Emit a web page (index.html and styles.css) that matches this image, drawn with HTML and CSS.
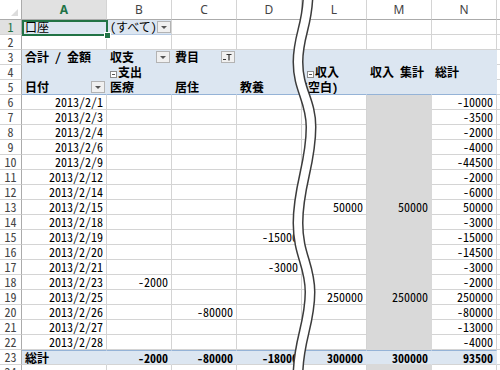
FILE: index.html
```html
<!DOCTYPE html>
<html lang="ja">
<head>
  <meta charset="UTF-8" />
  <title>家計簿 ピボット</title>
  <link rel="stylesheet" href="styles.css">
</head>
<body>

  <div class="sheet" id="sheet">
    <!-- 列見出し -->
    <div class="row head">
      <div class="rh corner"></div>
      <div class="sel">A</div>
      <div>B</div>
      <div>C</div>
      <div>D</div>
      <div>L</div>
      <div>M</div>
      <div>N</div>
      <div></div>
    </div>

    <!-- ページフィールド -->
    <div class="row">
      <div class="rh rh-sel">1</div>
      <div class="page active">口座</div>
      <div class="page field">(すべて)<span class="dd"></span></div>
      <div></div><div></div><div></div><div></div><div></div><div></div>
    </div>
    <div class="row">
      <div class="rh">2</div>
      <div></div><div></div><div></div><div></div><div></div><div></div><div></div><div></div>
    </div>

    <!-- ピボット見出し -->
    <div class="row pv">
      <div class="rh">3</div>
      <div class="b">合計 / 金額</div>
      <div class="b field">収支<span class="dd"></span></div>
      <div class="b field">費目<span class="dd flt">
        <svg width="12" height="10" viewBox="0 0 12 10"><path d="M1 7.5h3M4.5 2.5h5M7 2.5v6" stroke="#333" stroke-width="1.2" fill="none"/></svg>
      </span></div>
      <div></div><div></div><div></div><div></div>
      <div class="x"></div>
    </div>
    <div class="row pv">
      <div class="rh">4</div>
      <div></div>
      <div class="b"><span class="minus"></span>支出</div>
      <div></div><div></div>
      <div class="b col-l"><span class="minus"></span>収入</div>
      <div class="b gray">収入 集計</div>
      <div class="b">総計</div>
      <div class="x"></div>
    </div>
    <div class="row pv last">
      <div class="rh">5</div>
      <div class="b field">日付<span class="dd"></span></div>
      <div class="b">医療</div>
      <div class="b">居住</div>
      <div class="b">教養</div>
      <div class="b blank">(空白)</div>
      <div class="gray"></div>
      <div></div>
      <div class="x"></div>
    </div>

    <div id="body"></div>
  </div>

  <!-- 省略の波線 -->
  <svg class="cut" width="500" height="370" viewBox="0 0 500 370">
    <path d="M308,-6 C308,25 298,35 298,62 C298,90 311,100 311,127 C311,165 298,185 298,223 C298,255 310,265 310,292 C310,325 298,340 298,376"
          stroke="#3c3c3c" stroke-width="11" fill="none"/>
    <path d="M308,-6 C308,25 298,35 298,62 C298,90 311,100 311,127 C311,165 298,185 298,223 C298,255 310,265 310,292 C310,325 298,340 298,376"
          stroke="#fff" stroke-width="8" fill="none"/>
  </svg>

  <script>
    // 日付, 医療, 居住, 教養, (空白), 収入 集計, 総計
    const data = [
      ["2013/2/1", "", "", "", "", "", "-10000"],
      ["2013/2/3", "", "", "", "", "", "-3500"],
      ["2013/2/4", "", "", "", "", "", "-2000"],
      ["2013/2/6", "", "", "", "", "", "-4000"],
      ["2013/2/9", "", "", "", "", "", "-44500"],
      ["2013/2/12", "", "", "", "", "", "-2000"],
      ["2013/2/14", "", "", "", "", "", "-6000"],
      ["2013/2/15", "", "", "", "50000", "50000", "50000"],
      ["2013/2/18", "", "", "", "", "", "-3000"],
      ["2013/2/19", "", "", "-15000", "", "", "-15000"],
      ["2013/2/20", "", "", "", "", "", "-14500"],
      ["2013/2/21", "", "", "-3000", "", "", "-3000"],
      ["2013/2/23", "-2000", "", "", "", "", "-2000"],
      ["2013/2/25", "", "", "", "250000", "250000", "250000"],
      ["2013/2/26", "", "-80000", "", "", "", "-80000"],
      ["2013/2/27", "", "", "", "", "", "-13000"],
      ["2013/2/28", "", "", "", "", "", "-4000"]
    ];
    const totals = ["総計", "-2000", "-80000", "-18000", "300000", "300000", "93500"];

    function makeRow(num, cells, cls) {
      const row = document.createElement("div");
      row.className = "row" + (cls ? " " + cls : "");
      const rh = document.createElement("div");
      rh.className = "rh";
      rh.innerText = num;
      row.appendChild(rh);
      cells.forEach((text, i) => {
        const div = document.createElement("div");
        div.className = (i == 0 && cls == "total") ? "" : "num";
        if (i == 5) div.className += " gray";
        div.innerText = text;
        row.appendChild(div);
      });
      row.appendChild(document.createElement("div"));
      return row;
    }

    const body = document.getElementById("body");
    data.forEach((cells, i) => body.appendChild(makeRow(i + 6, cells)));
    body.appendChild(makeRow(23, totals, "total"));
    body.appendChild(makeRow(24, ["", "", "", "", "", "", ""]));
  </script>

</body>
</html>
```

FILE: styles.css
```css
body {
  margin: 0;
  background: #fff;
  color: #000;
  font-family: "Noto Sans CJK JP", "Noto Sans", sans-serif;
  font-size: 12px;
  font-feature-settings: "hwid";
  overflow: hidden;
}

.sheet {
  position: relative;
  width: 500px;
  height: 370px;
  overflow: hidden;
}

.row {
  display: grid;
  grid-template-columns: 22px 85px 65px 65px 65px 65px 65px 65px 3px;
  height: 15px;
}

.row > div {
  box-sizing: border-box;
  border-right: 1px solid #d4d4d4;
  border-bottom: 1px solid #d4d4d4;
  padding: 0 3px;
  line-height: 14px;
  white-space: nowrap;
  overflow: hidden;
}

.num {
  text-align: right;
}

/* 見出し */
.head {
  height: 20px;
}

.head > div {
  border-bottom-color: #ababab;
  text-align: center;
  line-height: 19px;
  color: #444;
  font-family: "Noto Sans", sans-serif;
  font-size: 12px;
}

.head .sel {
  background: #e1e1e1;
  color: #217346;
  font-weight: bold;
}

.row > .rh {
  padding: 0;
  border-right-color: #ababab;
  text-align: center;
  color: #444;
}

.row > .rh-sel {
  background: #e1e1e1;
  color: #217346;
}

.corner {
  position: relative;
}

.corner::after {
  content: "";
  position: absolute;
  right: 3px;
  bottom: 3px;
  border-left: 7px solid transparent;
  border-bottom: 7px solid #dcdcdc;
}

/* ページフィールド */
.row > .page {
  background: #dce6f1;
  border-bottom-color: #b8cce4;
}

.row > .active {
  position: relative;
  overflow: visible;
}

.active::before {
  content: "";
  position: absolute;
  left: 0;
  top: 0;
  width: 86px;
  height: 16px;
  box-sizing: border-box;
  border: 2px solid #217346;
  z-index: 2;
}

.active::after {
  content: "";
  position: absolute;
  left: 82px;
  top: 12px;
  width: 5px;
  height: 5px;
  background: #217346;
  border: 1px solid #fff;
  z-index: 3;
}

.row > .field {
  display: flex;
  align-items: center;
  justify-content: space-between;
  padding-right: 1px;
}

.dd {
  position: relative;
  width: 14px;
  height: 12px;
  box-sizing: border-box;
  border: 1px solid #b3b3b3;
  background: #f0f0f0;
  flex: none;
}

.dd::after {
  content: "";
  position: absolute;
  left: 3px;
  top: 4px;
  border-left: 3px solid transparent;
  border-right: 3px solid transparent;
  border-top: 3px solid #555;
}

.dd.flt::after {
  display: none;
}

.dd.flt svg {
  display: block;
}

/* ピボット */
.pv > div:not(.rh):not(.x) {
  background: #dce6f1;
  border-color: #dce6f1;
}

.pv.last > div:not(.rh):not(.x) {
  border-bottom-color: #95b3d7;
}

.b {
  font-weight: bold;
}

.row > .col-l {
  padding-left: 5px;
}

.row > .blank {
  padding-left: 0;
}

.minus {
  display: inline-block;
  position: relative;
  width: 7px;
  height: 7px;
  box-sizing: border-box;
  border: 1px solid #8c8c8c;
  background: #fff;
  margin-right: 1px;
  vertical-align: -1px;
}

.minus::after {
  content: "";
  position: absolute;
  left: 1px;
  top: 2px;
  width: 3px;
  height: 1px;
  background: #555;
}

.row > .gray,
.pv > .gray:not(.rh) {
  background: #d9d9d9;
  border-color: #d9d9d9;
}

.total > div:not(.rh):not(:last-child) {
  background: #dce6f1;
  border-right-color: #dce6f1;
  border-top: 1px solid #95b3d7;
  font-weight: bold;
  line-height: 13px;
}

.total > .gray {
  background: #dce6f1;
}

.cut {
  position: absolute;
  left: 0;
  top: 0;
  pointer-events: none;
}
```
